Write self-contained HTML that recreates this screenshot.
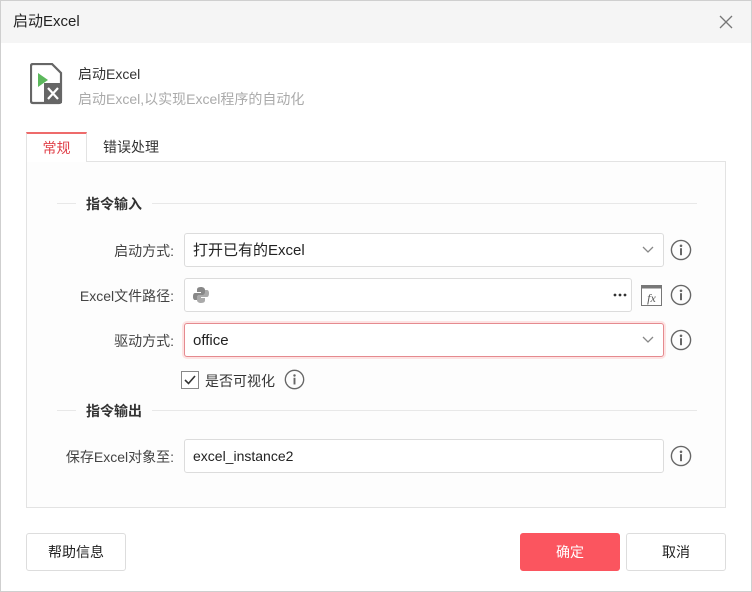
<!DOCTYPE html>
<html><head><meta charset="utf-8"><style>
*{box-sizing:border-box;margin:0;padding:0}
body{width:752px;height:592px;background:#fff;font-family:"Liberation Sans","Noto Sans CJK SC",sans-serif;color:#333;position:relative;overflow:hidden}
.frame{position:absolute;left:0;top:0;width:752px;height:592px;border:1px solid #cfcfcf}
.title{position:absolute;left:1px;top:1px;width:750px;height:42px;background:#f5f5f5;font-size:15px;line-height:42px;padding-left:12px;color:#222}
.abs{position:absolute}
.panel{position:absolute;left:26px;top:161px;width:700px;height:347px;border:1px solid #e3e3e3;background:#fdfdfd}
.tab{position:absolute;top:132px;height:30px;font-size:14px;line-height:30px;text-align:center}
.sec{position:absolute;font-size:14px;font-weight:bold;color:#333}
.line{position:absolute;height:1px;background:#e8e8e8}
.lbl{position:absolute;right:578px;font-size:14px;color:#444;text-align:right;white-space:nowrap}
.inp{position:absolute;left:184px;height:34px;border:1px solid #dcdcdc;border-radius:3px;background:#fff;font-size:15px;line-height:33px;padding-left:8px;color:#222}
.info{position:absolute;left:670px;width:22px;height:22px}
.btn{position:absolute;top:533px;height:38px;border:1px solid #ddd;border-radius:3px;background:#fff;font-size:14px;line-height:36px;text-align:center;color:#222}
</style></head><body>
<div class="frame"></div>
<div class="title">启动Excel</div>
<svg class="abs" style="left:718px;top:14px" width="16" height="16"><path d="M2 2L14 14M14 2L2 14" stroke="#777" stroke-width="1.3"/></svg>
<svg class="abs" style="left:30px;top:63px" width="34" height="42"><path d="M3 1H22L31 10V38Q31 40 29 40H3Q1 40 1 38V3Q1 1 3 1Z" fill="#fff" stroke="#666" stroke-width="2.2"/><path d="M8 10L18 17L8 24Z" fill="#5cb85c"/><rect x="14" y="20" width="18" height="20" fill="#666"/><path d="M18 25L28 36M28 25L18 36" stroke="#fff" stroke-width="2.2"/></svg>
<div class="abs" style="left:78px;top:64px;font-size:14px;color:#333">启动Excel</div>
<div class="abs" style="left:78px;top:89px;font-size:14px;color:#aaa">启动Excel,以实现Excel程序的自动化</div>
<div class="panel"></div>
<div class="tab" style="left:26px;width:61px;background:#fff;border:1px solid #e3e3e3;border-top:2px solid #ee6b6b;border-bottom:none;color:#e0414a;line-height:28px">常规</div>
<div class="tab" style="left:88px;width:86px;color:#333">错误处理</div>
<div class="line" style="left:57px;top:203px;width:640px"></div>
<div class="sec" style="left:76px;top:194px;background:#fdfdfd;padding:0 10px">指令输入</div>
<div class="line" style="left:57px;top:410px;width:640px"></div>
<div class="sec" style="left:76px;top:401px;background:#fdfdfd;padding:0 10px">指令输出</div>

<div class="lbl" style="top:241px">启动方式:</div>
<div class="inp" style="top:233px;width:480px">打开已有的Excel</div>
<svg class="abs" style="left:642px;top:246px" width="12" height="8"><path d="M1 1L6 6L11 1" fill="none" stroke="#888" stroke-width="1.3"/></svg>
<svg class="info" style="top:239px" viewBox="0 0 22 22"><circle cx="11" cy="11" r="9.6" fill="none" stroke="#666" stroke-width="1.4"/><circle cx="11" cy="6.8" r="1.3" fill="#666"/><rect x="10" y="9.2" width="2" height="7" fill="#666"/></svg>

<div class="lbl" style="top:286px">Excel文件路径:</div>
<div class="inp" style="top:278px;width:448px"></div>
<svg class="abs" style="left:192px;top:286px" width="18" height="18"><path d="M9 1C5 1 5 3 5 4V6H9V7H3C1 7 1 10 1 11C1 13 2 14 3 14H5V12C5 10 6 9 8 9H11C12 9 13 8 13 7V4C13 2 11 1 9 1Z" fill="#888"/><path d="M9 17C13 17 13 15 13 14V12H9V11H15C17 11 17 8 17 7C17 5 16 4 15 4H13V6C13 8 12 9 10 9H7C6 9 5 10 5 11V14C5 16 7 17 9 17Z" fill="#aaa"/></svg>
<svg class="abs" style="left:613px;top:293px" width="14" height="4"><circle cx="2" cy="2" r="1.4" fill="#333"/><circle cx="7" cy="2" r="1.4" fill="#333"/><circle cx="12" cy="2" r="1.4" fill="#333"/></svg>
<svg class="abs" style="left:641px;top:285px" width="21" height="21"><rect x="0.5" y="0.5" width="20" height="20" fill="#fff" stroke="#777"/><rect x="0.5" y="0.5" width="20" height="3" fill="#777"/><text x="10.5" y="17" font-size="12" font-style="italic" font-family="Liberation Serif" fill="#555" text-anchor="middle">fx</text></svg>
<svg class="info" style="top:284px" viewBox="0 0 22 22"><circle cx="11" cy="11" r="9.6" fill="none" stroke="#666" stroke-width="1.4"/><circle cx="11" cy="6.8" r="1.3" fill="#666"/><rect x="10" y="9.2" width="2" height="7" fill="#666"/></svg>

<div class="lbl" style="top:331px">驱动方式:</div>
<div class="inp" style="top:323px;width:480px;border-color:#e58a8f;box-shadow:0 0 0 2px #fde3e3">office</div>
<svg class="abs" style="left:642px;top:336px" width="12" height="8"><path d="M1 1L6 6L11 1" fill="none" stroke="#888" stroke-width="1.3"/></svg>
<svg class="info" style="top:329px" viewBox="0 0 22 22"><circle cx="11" cy="11" r="9.6" fill="none" stroke="#666" stroke-width="1.4"/><circle cx="11" cy="6.8" r="1.3" fill="#666"/><rect x="10" y="9.2" width="2" height="7" fill="#666"/></svg>

<svg class="abs" style="left:181px;top:371px" width="18" height="18"><rect x="0.5" y="0.5" width="17" height="17" fill="#fff" stroke="#888"/><path d="M4 9L7.5 12.5L14 5" fill="none" stroke="#333" stroke-width="1.6"/></svg>
<div class="abs" style="left:205px;top:371px;font-size:14px;color:#333">是否可视化</div>
<svg class="info" style="left:284px;top:369px;width:21px;height:21px" viewBox="0 0 22 22"><circle cx="11" cy="11" r="9.6" fill="none" stroke="#666" stroke-width="1.4"/><circle cx="11" cy="6.8" r="1.3" fill="#666"/><rect x="10" y="9.2" width="2" height="7" fill="#666"/></svg>

<div class="lbl" style="top:447px">保存Excel对象至:</div>
<div class="inp" style="top:439px;width:480px;font-size:14px">excel_instance2</div>
<svg class="info" style="top:445px" viewBox="0 0 22 22"><circle cx="11" cy="11" r="9.6" fill="none" stroke="#666" stroke-width="1.4"/><circle cx="11" cy="6.8" r="1.3" fill="#666"/><rect x="10" y="9.2" width="2" height="7" fill="#666"/></svg>

<div class="btn" style="left:26px;width:100px">帮助信息</div>
<div class="btn" style="left:520px;width:100px;background:#fb555f;border-color:#fb555f;color:#fff">确定</div>
<div class="btn" style="left:626px;width:100px">取消</div>
</body></html>
